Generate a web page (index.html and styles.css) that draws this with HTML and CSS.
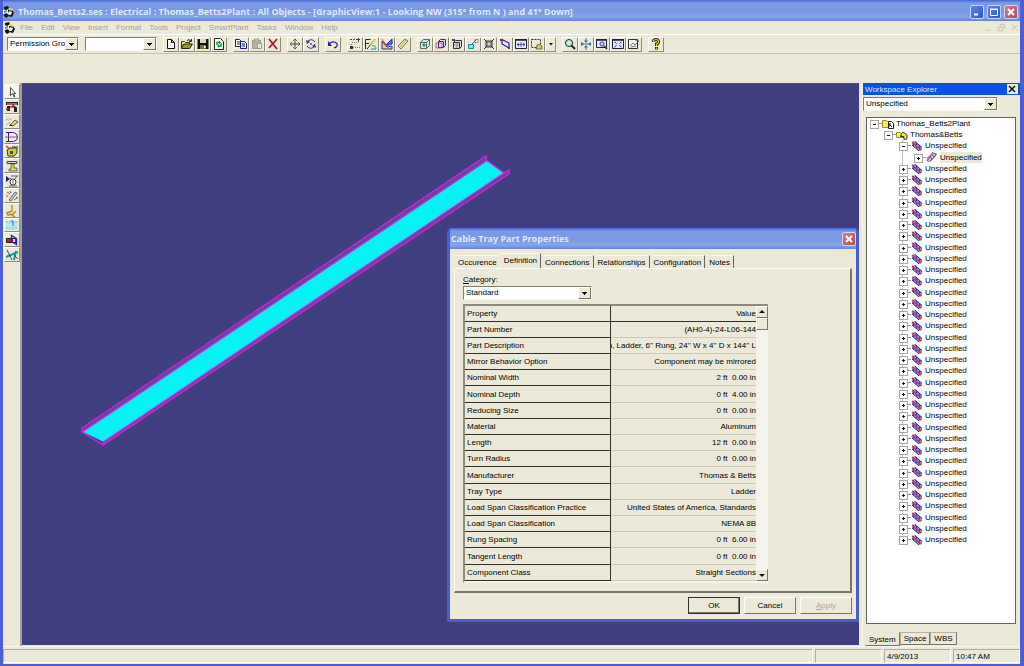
FILE: index.html
```html
<!DOCTYPE html>
<html lang="en">
<head>
<meta charset="utf-8">
<title>Thomas_Betts2.ses</title>
<link rel="stylesheet" href="styles.css">
</head>
<body>
<svg class="defs" aria-hidden="true">
  <symbol id="app" viewBox="0 0 12 12"><path d="M0 4h5v4H0z" fill="#fff"/><path d="M1 1l4-1 1 2-3 2-2-1zM5 4h4l2 3-2 4-4-1 3-2-3-2zM1 8l3-1 2 3-3 2-2-2z" fill="#111"/><path d="M6 2l4 1-1 2-3-1z" fill="#dfe04a"/><path d="M1 5l3-1v2L1 7z" fill="#2c9c8c"/><path d="M6 5l3 1-1 3-3-1z" fill="#f4f4e8"/></symbol>
  <symbol id="tree-plant" viewBox="0 0 12 10"><path d="M.5 1.500h4l1 1h3v6h-8z" fill="#f6ee5a" stroke="#9a9428"/><path d="M6.500 2.500h3l2 2v5h-5z" fill="#fff" stroke="#222"/><path d="M7 5l3 3M7 8V5h2" stroke="#222" fill="none"/></symbol>
  <symbol id="tree-system" viewBox="0 0 12 10"><path d="M.5 2.500h4l1 1h3v4h-8z" fill="#f6ee5a" stroke="#9a9428"/><path d="M5 4l2-2 4 3v4l-3 1V7L5 6z" fill="#f2e33c" stroke="#444"/><path d="M4 6l4 1" stroke="#222"/></symbol>
  <symbol id="tree-run" viewBox="0 0 12 10"><path d="M1 1l3-1 7 6v3l-3 1-7-6z" fill="#8a8edc"/><path d="M1 4l7 6M4 .5l7 6" stroke="#25309c"/><path d="M2.500 1v4M5.500 2v5M8.500 5v4" stroke="#25309c" stroke-width=".8"/><path d="M1 1l9 8" stroke="#d83048" stroke-width="1.400"/></symbol>
  <symbol id="tree-part" viewBox="0 0 12 10"><path d="M1 6l6-5 4 1-6 7-3 .5z" fill="#c2c2c8" stroke="#777" stroke-width=".7"/><path d="M1 9l6-9" stroke="#b020b8"/><path d="M4 9l6-6M4 5l2 2M6 3l2 2M8 1l2 2" stroke="#555" stroke-width=".8"/></symbol>
</svg>

<div class="window">
  <header class="titlebar">
    <svg class="app-icon"><use href="#app"/></svg>
    <h1>Thomas_Betts2.ses : Electrical : Thomas_Betts2Plant : All Objects - [GraphicView:1 - Looking NW (315° from N ) and 41° Down]</h1>
    <button class="cap" aria-label="Minimize"><svg viewBox="0 0 12 12"><path d="M3 8.500h4" stroke="#fff" stroke-width="2"/></svg></button>
    <button class="cap" aria-label="Maximize"><svg viewBox="0 0 12 12"><path d="M2.500 3.500h7v6h-7zM2 3h8" stroke="#fff" fill="none"/></svg></button>
    <button class="cap cap-close" aria-label="Close"><svg viewBox="0 0 12 12"><path d="M3 3l6 6M9 3l-6 6" stroke="#fff" stroke-width="2"/></svg></button>
  </header>

  <nav class="menubar">
    <svg class="app-icon"><use href="#app"/></svg>
    <button>File</button><button>Edit</button><button>View</button><button>Insert</button><button>Format</button><button>Tools</button><button>Project</button><button>SmartPlant</button><button>Tasks</button><button>Window</button><button>Help</button>
    <span class="mdi">
      <button aria-label="Minimize view"><svg viewBox="0 0 10 10"><path d="M2 8h4"/></svg></button>
      <button aria-label="Restore view"><svg viewBox="0 0 10 10"><path d="M3.500 4V1.500h5v4H7M1.500 4.500h5v4h-5z"/></svg></button>
      <button aria-label="Close view"><svg viewBox="0 0 10 10"><path d="M2 2l6 6M8 2L2 8"/></svg></button>
    </span>
  </nav>

  <div class="toolbar" role="toolbar">
    <span class="combo combo-small"><select aria-label="Permission group"><option>Permission Group</option></select></span>
    <span class="combo combo-small"><select aria-label="Filter"><option></option></select></span>
    <div class="group">
      <button aria-label="New"><svg viewBox="0 0 12 12"><path d="M2.500 1.500h4l3 3v6h-7zM6.500 1.500v3h3" fill="#fff" stroke="#111"/></svg></button>
      <button aria-label="Open"><svg viewBox="0 0 12 12"><path d="M.5 10V3.500h3l1 1h4V6" fill="#f4f080" stroke="#333"/><path d="M.5 10.500l2-4.500h9l-3 4.500z" fill="#a09a18" stroke="#222"/><path d="M6 2.500q2-2 4 .5M10.500 1v2.500H8" fill="none" stroke="#222"/></svg></button>
      <button aria-label="Save"><svg viewBox="0 0 12 12"><path d="M.5 1h11v10h-11z" fill="#111"/><path d="M3 1h6v4H3z" fill="#d8d6cc"/><path d="M3 7h6v4H3z" fill="#77771c"/><path d="M7 8h1.500v2H7z" fill="#fff"/></svg></button>
      <button aria-label="Refresh"><svg viewBox="0 0 12 12"><path d="M1.500 .5h6l3 3v8h-9z" fill="#fff" stroke="#222"/><path d="M4 7V4.500h3M8 5.500V8H5" fill="none" stroke="#129a30" stroke-width="1.500"/><path d="M6 2.500l2 2-2 2zM6 6l-2 2 2 2z" fill="#129a30"/></svg></button>
    </div>
    <div class="group">
      <button aria-label="Copy"><svg viewBox="0 0 12 12"><path d="M.5 1.500h4l2 2v5h-6z" fill="#fff" stroke="#223"/><path d="M2 4h3M2 6h3" stroke="#334"/><path d="M5.500 3.500h4l2 2v5h-6z" fill="#eef" stroke="#1a1a90"/><path d="M7 6h3M7 8h3" stroke="#1a1a90"/></svg></button>
      <button aria-label="Paste" disabled><svg viewBox="0 0 12 12"><path d="M1.500 2.500h8v8h-8z" fill="#b5b2a5" stroke="#9c998c"/><path d="M3.500 1h4v2h-4z" fill="#ddd" stroke="#9c998c"/><path d="M6.500 5.500h4v5h-4z" fill="#eceada" stroke="#9c998c"/></svg></button>
      <button aria-label="Delete"><svg viewBox="0 0 12 12"><path d="M2 1l8 10M10 1L2 10" stroke="#a01020" stroke-width="1.600"/></svg></button>
    </div>
    <div class="group">
      <button aria-label="Move"><svg viewBox="0 0 12 12"><path d="M6 1v10M1 6h10M4 3l2-2 2 2M4 9l2 2 2-2M3 4L1 6l2 2M9 4l2 2-2 2" fill="none" stroke="#444" stroke-width=".8"/><path d="M5 5h2v2H5z" fill="#cfc85a" stroke="#333" stroke-width=".6"/></svg></button>
      <button aria-label="Rotate"><svg viewBox="0 0 12 12"><path d="M10 4Q7 0 3 3M2 8q3 4 7 1" fill="none" stroke="#2a2a9a"/><path d="M1 2l1 4 3-2zM11 10l-1-4-3 2z" fill="#2a2a9a"/><path d="M6 5v2M5 6h2" stroke="#555"/></svg></button>
    </div>
    <div class="group">
      <button aria-label="Undo"><svg viewBox="0 0 12 12"><path d="M2 6q4-4 8-.5Q11 9 7 10" fill="none" stroke="#22228c" stroke-width="1.200"/><path d="M1 3v5h4z" fill="#22228c"/></svg></button>
    </div>
    <div class="group">
      <button aria-label="Point"><svg viewBox="0 0 12 12"><path d="M1 1.500h2M4 2l2-1M7 1.500h4M9.500 0v4" stroke="#444"/><path d="M2.500 9V5M4 9.500h7M3 4.500h5" stroke="#777" stroke-dasharray="1 1"/><path d="M1 8h3v3H1z" fill="#333"/></svg></button>
      <button aria-label="Sketch"><svg viewBox="0 0 12 12"><path d="M.5 11V1.500h5M.5 5.500H4" stroke="#222" fill="none"/><path d="M2 11l8-10" stroke="#222"/><path d="M9 1l2 1-5 6-2 1z" fill="#e6dc3c"/><path d="M7 8q4-1 4 3H6" fill="none" stroke="#129a9a"/></svg></button>
      <button aria-label="Measure"><svg viewBox="0 0 12 12"><path d="M1 3v8h10V8L6 9z" fill="#e6dc3c" stroke="#2a2aa0"/><path d="M1 1l4 6 6-5M1 4l7 4" stroke="#c33" fill="none" stroke-width=".8"/><path d="M5 7l6-6v5z" fill="#2a9c9c" stroke="#2a2aa0"/></svg></button>
      <button aria-label="Ruler"><svg viewBox="0 0 12 12"><path d="M1 8l7-7 3 2-7 8z" fill="#efe9a0" stroke="#555" stroke-width=".8"/><path d="M2.500 9.500l7-8" stroke="#b8ac20"/></svg></button>
    </div>
    <div class="group">
      <button aria-label="View box"><svg viewBox="0 0 12 12"><path d="M1.500 4.500l3-3h6v6l-3 3h-6zM1.500 4.500h6v6M7.500 4.500l3-3" fill="#d5eeea" stroke="#444" stroke-width=".8"/><path d="M3 7h4M5 5v4" stroke="#128a6a" stroke-width="1.200"/></svg></button>
      <button aria-label="Clip box"><svg viewBox="0 0 12 12"><path d="M3.500 3.500l2-2h5v6l-2 2h-5zM3.500 3.500h5v6" fill="#dfe0ff" stroke="#2a2aa0"/><path d="M1 5h6v5H1z" fill="none" stroke="#c0392b" stroke-width=".8"/></svg></button>
      <button aria-label="Box select"><svg viewBox="0 0 12 12"><path d="M2.500 4.500h6v6h-6zM2.500 4.500l2-2h6v6l-2 2" fill="#e0dee4" stroke="#333"/><path d="M1 1h3v2H1z" fill="#456"/><path d="M6 5v5M3 7h5" stroke="#889"/></svg></button>
      <button aria-label="Rotate view"><svg viewBox="0 0 12 12"><path d="M1.500 6.500h5v4h-5z" fill="#8fe0e4" stroke="#128a96"/><path d="M8 1.500h3v3H8z" fill="#fff" stroke="#889"/><path d="M5 6l4-4" stroke="#c33"/></svg></button>
      <button aria-label="Fence"><svg viewBox="0 0 12 12"><path d="M1 1l10 10M11 1L1 11M3 3h6v6H3z" stroke="#222" fill="none" stroke-width=".9"/><path d="M4 4h4v4H4z" fill="#d0cee8" stroke="#222" stroke-width=".6"/></svg></button>
      <button aria-label="Plane"><svg viewBox="0 0 12 12"><path d="M3 1.500l7 3.500v5L3 6z" fill="#e8e8ff" stroke="#20208c" stroke-width="1.200"/><path d="M1 1h2v2H1zM9 9h2v2H9z" fill="#b01830"/></svg></button>
      <button aria-label="Pan window"><svg viewBox="0 0 12 12"><path d="M.5 1.500h11v9H.5z" fill="#e8eafa" stroke="#223"/><path d="M0 2h12" stroke="#223" stroke-width="1.500"/><path d="M2 6.500h8M6 4v5M4 5L2 6.500 4 8M8 5l2 1.500L8 8" fill="none" stroke="#3838a8" stroke-width=".8"/></svg></button>
      <button aria-label="Select area"><svg viewBox="0 0 12 12"><path d="M.5 1.500h9v8h-9z" fill="none" stroke="#333" stroke-dasharray="2 1"/><path d="M5 11l1-4q3-2 5 1v3z" fill="#d8ca3c" stroke="#554" stroke-width=".8"/></svg></button>
      <button class="drop" aria-label="Select area options"><svg viewBox="0 0 8 12"><path d="M2 5h4L4 7.500z" fill="#111"/></svg></button>
    </div>
    <div class="group">
      <button aria-label="Zoom"><svg viewBox="0 0 12 12"><circle cx="5" cy="5" r="3.500" fill="#c4f0ee" stroke="#222"/><path d="M7.500 7.500L11 11" stroke="#222" stroke-width="2"/></svg></button>
      <button aria-label="Fit"><svg viewBox="0 0 12 12"><path d="M6 0v4M6 8v4M1 6h10" stroke="#3a6f9a"/><path d="M4 2.500h4L6 5zM4 9.500h4L6 7zM1 4l3 2-3 2zM11 4L8 6l3 2z" fill="#3a6f9a"/></svg></button>
      <button aria-label="Zoom area"><svg viewBox="0 0 12 12"><path d="M.5 1.500h10v8H.5z" fill="#e4e6f6" stroke="#223"/><path d="M0 2h11" stroke="#224" stroke-width="1.500"/><circle cx="6" cy="6" r="2" fill="#c4f0ee" stroke="#3838a0"/><path d="M8 8l3 3" stroke="#222" stroke-width="1.500"/></svg></button>
      <button aria-label="Tile"><svg viewBox="0 0 12 12"><path d="M.5 1.500h11v9H.5z" fill="#e4e6f6" stroke="#223"/><path d="M0 2h12" stroke="#224" stroke-width="1.500"/><path d="M2.500 4l2 1.500M9.500 4l-2 1.500M2.500 9l2-1.500M9.500 9l-2-1.500" stroke="#2a2a90"/></svg></button>
      <button aria-label="Previous view"><svg viewBox="0 0 12 12"><path d="M.5 1.500h9v9h-9z" fill="#f2f2f2" stroke="#333"/><path d="M2 8l3-3 2 2 4-4M7 2l4 1M3 9l5-1" fill="none" stroke="#555" stroke-width=".8"/></svg></button>
    </div>
    <div class="group">
      <button aria-label="Help"><svg viewBox="0 0 12 12"><path d="M3.500 4Q3.500 1.500 6 1.500T8.500 4Q8.500 5.500 6.500 6v2M6.500 9v2.500" fill="none" stroke="#222" stroke-width="3"/><path d="M3.500 4Q3.500 1.500 6 1.500T8.500 4Q8.500 5.500 6.500 6v2M6.500 9.500V11" fill="none" stroke="#e8d820" stroke-width="1.200"/></svg></button>
    </div>
  </div>

  <div class="workspace">
    <div class="tools" role="toolbar">
      <button class="on" aria-label="Select"><svg viewBox="0 0 14 12"><path d="M5.500 1.500v8l2-2 1.500 3.500 1-.5-1.500-3h2z" fill="#fff" stroke="#222" stroke-width=".8"/></svg></button>
      <button aria-label="Route pipe"><svg viewBox="0 0 14 12"><path d="M1 4V1h12v3zM2 10V5h3v5zM9 11V6h3v5z" fill="#222"/><path d="M2 3h10M6 6q3-3 6 0" stroke="#d8d6cc"/><path d="M1 8h3M5 6l4-1M8 3v4" stroke="#c02030" stroke-width="1.500"/></svg></button>
      <button aria-label="Edit"><svg viewBox="0 0 14 12"><path d="M1 4q3-3 6 0M2 9l3-3" stroke="#aaa" fill="none"/><path d="M5 9l5-5 3 2-5 4z" fill="#e6d84c" stroke="#333" stroke-width=".8"/><path d="M4 10l2-2 1 2z" fill="#222"/></svg></button>
      <button aria-label="Insert equipment"><svg viewBox="0 0 14 12"><path d="M3.500 1.500h5q4 1 4 4.500t-4 4.500h-5z" fill="#eef" stroke="#2020b0"/><path d="M0 6h13" stroke="#d03040"/><path d="M1 1.500h3M1 10.500h3" stroke="#2020b0"/></svg></button>
      <button aria-label="Insert box"><svg viewBox="0 0 14 12"><path d="M2 5l3-2h7v5l-3 3H3z" fill="#d8cc30" stroke="#333"/><path d="M5 6h3v3H5z" fill="#3a4a8a"/><path d="M1 1l4 3" stroke="#d03040" stroke-width="1.500"/><path d="M7 2h6" stroke="#333"/></svg></button>
      <button aria-label="Insert beam"><svg viewBox="0 0 14 12"><path d="M2 1.500h10v2H2z" fill="#ddd" stroke="#444"/><path d="M6 4h3v4h3v3H4V9h2z" fill="#ecd81c" stroke="#2a3a9a" stroke-width=".7"/></svg></button>
      <button aria-label="Insert instrument"><svg viewBox="0 0 14 12"><path d="M1 1l4 3-4 3z" fill="#1c1c90"/><circle cx="8" cy="7" r="3" fill="#fff" stroke="#333"/><path d="M5 3l2 2M12 1L9 5M4 11h8M6 1h7M8 5v4" stroke="#444" stroke-width=".8"/></svg></button>
      <button aria-label="Insert by rule"><svg viewBox="0 0 14 12"><path d="M4 10l6-8 2 1-6 8z" fill="#c8c8cc" stroke="#555" stroke-width=".8"/><path d="M2 2l3 2M1 6h2M9 10l3-2" stroke="#d04050"/><path d="M5 1l1 2M11 7l2 1" stroke="#3a5ab0"/></svg></button>
      <button aria-label="Insert support"><svg viewBox="0 0 14 12"><path d="M7 0v6L2 8l1 2 5-1 3-3M6 9l4 3" fill="none" stroke="#b48a14" stroke-width="1.500"/><path d="M8 1v5" stroke="#f0dc30"/></svg></button>
      <button aria-label="Insert slab"><svg viewBox="0 0 14 12"><path d="M1 2h12v9H1z" fill="#b8ecea"/><path d="M1 3h12M1 9h12" stroke="#7cc8c8" stroke-dasharray="2 1"/><path d="M8 2v5M8 2H6" stroke="#2a6ab0"/></svg></button>
      <button aria-label="Insert split"><svg viewBox="0 0 14 12"><path d="M1.500 4.500h10v4h-10z" fill="#c02040" stroke="#222"/><path d="M6.500 1.500l5 3v6l-5-3z" fill="none" stroke="#2020b0" stroke-width="1.300"/><path d="M8 5h2v3H8z" fill="#cdd0f8"/></svg></button>
      <button aria-label="Insert branch"><svg viewBox="0 0 14 12"><path d="M1 8l12-5M9 11l2-9" stroke="#149a96" stroke-width="2"/><path d="M2 1l5 10M9 6l4 4" stroke="#2a4a7a"/></svg></button>
    </div>

    <main class="view">
      <svg class="scene" viewBox="0 0 837 561" role="img" aria-label="Cable tray">
        <path d="M61 344L465 71v6L61 348z" fill="#50508c"/>
        <path d="M82 358l399-269 6-3v4L82 361z" fill="#50508c"/>
        <path d="M61 348L465 77l17 12L82 358z" fill="#00f4f4"/>
        <path d="M60 348v-4L464 72v5L60 348l21 13v-3L482 89l5-3v4L81 361M464 76l18 13" fill="none" stroke="#f013f0" stroke-width="1.200"/>
      </svg>

      <section class="dialog" aria-label="Cable Tray Part Properties">
        <header class="dialog-title">
          <h2>Cable Tray Part Properties</h2>
          <button class="cap cap-close" aria-label="Close dialog"><svg viewBox="0 0 12 12"><path d="M3 3l6 6M9 3l-6 6" stroke="#fff" stroke-width="2"/></svg></button>
        </header>
        <div class="dialog-body">
          <div class="tabs" role="tablist">
            <button role="tab">Occurence</button><button role="tab" class="active" aria-selected="true">Definition</button><button role="tab">Connections</button><button role="tab">Relationships</button><button role="tab">Configuration</button><button role="tab">Notes</button>
          </div>
          <div class="page">
            <label for="category"><u>C</u>ategory:</label>
            <span class="combo combo-category"><select id="category"><option>Standard</option></select></span>
            <div class="sheet">
              <table>
                <thead><tr><th>Property</th><th><div>Value</div></th></tr></thead>
                <tbody>
                  <tr><th>Part Number</th><td><div>(AH0-4)-24-L06-144</div></td></tr>
                  <tr><th>Part Description</th><td><div>n, Ladder, 6'' Rung, 24'' W x 4'' D x 144'' L</div></td></tr>
                  <tr><th>Mirror Behavior Option</th><td><div>Component may be mirrored</div></td></tr>
                  <tr><th>Nominal Width</th><td><div>2 ft&nbsp; 0.00 in</div></td></tr>
                  <tr><th>Nominal Depth</th><td><div>0 ft&nbsp; 4.00 in</div></td></tr>
                  <tr><th>Reducing Size</th><td><div>0 ft&nbsp; 0.00 in</div></td></tr>
                  <tr><th>Material</th><td><div>Aluminum</div></td></tr>
                  <tr><th>Length</th><td><div>12 ft&nbsp; 0.00 in</div></td></tr>
                  <tr><th>Turn Radius</th><td><div>0 ft&nbsp; 0.00 in</div></td></tr>
                  <tr><th>Manufacturer</th><td><div>Thomas &amp; Betts</div></td></tr>
                  <tr><th>Tray Type</th><td><div>Ladder</div></td></tr>
                  <tr><th>Load Span Classification Practice</th><td><div>United States of America, Standards</div></td></tr>
                  <tr><th>Load Span Classification</th><td><div>NEMA 8B</div></td></tr>
                  <tr><th>Rung Spacing</th><td><div>0 ft&nbsp; 6.00 in</div></td></tr>
                  <tr><th>Tangent Length</th><td><div>0 ft&nbsp; 0.00 in</div></td></tr>
                  <tr><th>Component Class</th><td><div>Straight Sections</div></td></tr>
                </tbody>
              </table>
              <div class="scroll">
                <button aria-label="Scroll up"><svg viewBox="0 0 10 10"><path d="M2 6h6L5 3z"/></svg></button>
                <span class="thumb"></span>
                <button class="down" aria-label="Scroll down"><svg viewBox="0 0 10 10"><path d="M2 4h6L5 7z"/></svg></button>
              </div>
            </div>
          </div>
          <div class="actions">
            <button class="default">OK</button><button>Cancel</button><button disabled><u>A</u>pply</button>
          </div>
        </div>
      </section>
    </main>

    <aside class="explorer">
      <header><h2>Workspace Explorer</h2><button aria-label="Close explorer"><svg viewBox="0 0 10 10"><path d="M2 2l6 6M8 2L2 8" stroke="#111" stroke-width="1.500"/></svg></button></header>
      <span class="combo combo-explorer"><select aria-label="Workspace filter"><option>Unspecified</option></select></span>
      <div class="tree-panel">
        <ul class="tree">
          <li class="l0 open"><i></i><svg><use href="#tree-plant"/></svg><span>Thomas_Betts2Plant</span></li>
          <li class="l1 open"><i></i><svg><use href="#tree-system"/></svg><span>Thomas&amp;Betts</span></li>
          <li class="l2 open"><i></i><svg><use href="#tree-run"/></svg><span>Unspecified</span></li>
          <li class="l3"><i></i><svg><use href="#tree-part"/></svg><span class="picked">Unspecified</span></li>
          <li class="l2"><i></i><svg><use href="#tree-run"/></svg><span>Unspecified</span></li>
          <li class="l2"><i></i><svg><use href="#tree-run"/></svg><span>Unspecified</span></li>
          <li class="l2"><i></i><svg><use href="#tree-run"/></svg><span>Unspecified</span></li>
          <li class="l2"><i></i><svg><use href="#tree-run"/></svg><span>Unspecified</span></li>
          <li class="l2"><i></i><svg><use href="#tree-run"/></svg><span>Unspecified</span></li>
          <li class="l2"><i></i><svg><use href="#tree-run"/></svg><span>Unspecified</span></li>
          <li class="l2"><i></i><svg><use href="#tree-run"/></svg><span>Unspecified</span></li>
          <li class="l2"><i></i><svg><use href="#tree-run"/></svg><span>Unspecified</span></li>
          <li class="l2"><i></i><svg><use href="#tree-run"/></svg><span>Unspecified</span></li>
          <li class="l2"><i></i><svg><use href="#tree-run"/></svg><span>Unspecified</span></li>
          <li class="l2"><i></i><svg><use href="#tree-run"/></svg><span>Unspecified</span></li>
          <li class="l2"><i></i><svg><use href="#tree-run"/></svg><span>Unspecified</span></li>
          <li class="l2"><i></i><svg><use href="#tree-run"/></svg><span>Unspecified</span></li>
          <li class="l2"><i></i><svg><use href="#tree-run"/></svg><span>Unspecified</span></li>
          <li class="l2"><i></i><svg><use href="#tree-run"/></svg><span>Unspecified</span></li>
          <li class="l2"><i></i><svg><use href="#tree-run"/></svg><span>Unspecified</span></li>
          <li class="l2"><i></i><svg><use href="#tree-run"/></svg><span>Unspecified</span></li>
          <li class="l2"><i></i><svg><use href="#tree-run"/></svg><span>Unspecified</span></li>
          <li class="l2"><i></i><svg><use href="#tree-run"/></svg><span>Unspecified</span></li>
          <li class="l2"><i></i><svg><use href="#tree-run"/></svg><span>Unspecified</span></li>
          <li class="l2"><i></i><svg><use href="#tree-run"/></svg><span>Unspecified</span></li>
          <li class="l2"><i></i><svg><use href="#tree-run"/></svg><span>Unspecified</span></li>
          <li class="l2"><i></i><svg><use href="#tree-run"/></svg><span>Unspecified</span></li>
          <li class="l2"><i></i><svg><use href="#tree-run"/></svg><span>Unspecified</span></li>
          <li class="l2"><i></i><svg><use href="#tree-run"/></svg><span>Unspecified</span></li>
          <li class="l2"><i></i><svg><use href="#tree-run"/></svg><span>Unspecified</span></li>
          <li class="l2"><i></i><svg><use href="#tree-run"/></svg><span>Unspecified</span></li>
          <li class="l2"><i></i><svg><use href="#tree-run"/></svg><span>Unspecified</span></li>
          <li class="l2"><i></i><svg><use href="#tree-run"/></svg><span>Unspecified</span></li>
          <li class="l2"><i></i><svg><use href="#tree-run"/></svg><span>Unspecified</span></li>
          <li class="l2"><i></i><svg><use href="#tree-run"/></svg><span>Unspecified</span></li>
          <li class="l2"><i></i><svg><use href="#tree-run"/></svg><span>Unspecified</span></li>
          <li class="l2"><i></i><svg><use href="#tree-run"/></svg><span>Unspecified</span></li>
          <li class="l2 last"><i></i><svg><use href="#tree-run"/></svg><span>Unspecified</span></li>
        </ul>
      </div>
      <div class="bottom-tabs" role="tablist">
        <button role="tab" class="active" aria-selected="true">System</button><button role="tab">Space</button><button role="tab">WBS</button>
      </div>
    </aside>
  </div>

  <footer class="status"><span class="grow"></span><span></span><span>4/9/2013</span><span>10:47 AM</span></footer>
</div>
</body>
</html>
```
FILE: styles.css
```css
:root {
  --face: #ece9d8;
  --ink: #000;
  --sans: "Liberation Sans", sans-serif;
}
* { box-sizing: border-box; }
body { margin: 0; background: var(--face); color: var(--ink); font: 8px/11px var(--sans); }
button, select { font: inherit; color: inherit; margin: 0; padding: 0; border: 0; background: none; border-radius: 0; }
button svg { display: block; }
h1, h2 { margin: 0; font: bold 9px/12px "Open Sans", sans-serif; color: #dfe9ff; white-space: nowrap; }
.defs { position: absolute; width: 0; height: 0; }

.window { display: flex; flex-direction: column; min-height: 100vh; border: solid #4c5fd6; border-width: 0 4px 3px 3px; }

/* title bar */
.titlebar { display: flex; align-items: center; gap: 3px; height: 21px; padding: 3px 2px 0 0; background: linear-gradient(#4566cf, #7b9be8 3px, #7b98e0 12px, #84a6ee 17px, #6883d6); }
.titlebar h1 { flex: 1; overflow: hidden; }
.app-icon { width: 12px; height: 12px; flex: none; }
.cap { width: 14px; height: 14px; border: 1px solid #c9d6f8; border-radius: 2px; background: linear-gradient(135deg, #5f86ea, #2c56cf); }
.cap svg { width: 12px; height: 12px; }
.cap-close { background: linear-gradient(135deg, #cf7f86, #b04a5c); }

/* menu */
.menubar { display: flex; align-items: center; height: 14px; padding-left: 1px; border-bottom: 1px solid #fff; color: #a5a192; }
.menubar > button { margin-left: 8px; }
.menubar .app-icon + button { margin-left: 4px; }
.mdi { display: flex; gap: 4px; margin-left: auto; padding-right: 1px; }
.mdi svg { width: 9px; height: 9px; fill: none; stroke: #c2bfb0; stroke-width: 1; }

/* combo boxes */
.combo { display: flex; position: relative; height: 14px; background: #fff; border: 1px solid; border-color: #7f7d70 #f8f7f0 #f8f7f0 #7f7d70; }
.combo select { appearance: none; width: 100%; padding: 0 11px 0 2px; line-height: 12px; overflow: hidden; }
.combo::after { content: ""; position: absolute; right: 0; top: 0; bottom: 0; width: 11px; pointer-events: none; border: 1px solid; border-color: #fff #77756a #77756a #fff; background: linear-gradient(var(--ink), var(--ink)) center 4px / 5px 1px no-repeat, linear-gradient(var(--ink), var(--ink)) center 5px / 3px 1px no-repeat, linear-gradient(var(--ink), var(--ink)) center 6px / 1px 1px no-repeat, var(--face); }
.combo-small { width: 72px; }
.combo-category { width: 129px; }
.combo-explorer { width: 135px; }

/* top toolbar */
.toolbar { display: flex; align-items: center; gap: 6px; height: 19px; margin-bottom: 29px; padding-left: 4px; border-bottom: 1px solid #c5c2b2; }
.group { display: flex; }
.group button, .tools button { display: grid; place-items: center; width: 16px; height: 15px; border: 1px solid; border-color: #fff #8d8a7c #8d8a7c #fff; }
.group svg { width: 12px; height: 12px; }
.group .drop { width: 11px; }
.group .drop svg { width: 8px; }

/* work area */
.workspace { flex: 1; display: flex; }
.tools { flex: none; width: 19px; padding: 1px 2px 0 1px; border-right: 2px solid #a5a292; }
.tools button:nth-child(5n) { height: 14px; }
.tools svg { width: 14px; height: 12px; }
.tools .on { background: #f7f5ee; }
.view { position: relative; flex: 1; min-width: 0; margin-bottom: 1px; background: #403f80; border-top: 1px solid #55545c; }
.scene { display: block; width: 100%; }

/* properties dialog */
.dialog { position: absolute; right: 0; top: 144px; width: 412px; padding: 0 3px 3px 3px; background: #4a5cd4; border-radius: 5px 5px 0 0; }
.dialog-title { display: flex; align-items: center; justify-content: space-between; height: 21px; background: linear-gradient(#4566cf, #7b9be8 3px, #7b98e0 12px, #84a6ee 17px, #6883d6); }
.dialog-title h2 { padding-left: 1px; }
.dialog-body { padding: 4px 4px 5px; background: var(--face); }
.tabs { display: flex; align-items: flex-end; height: 15px; }
.tabs button { height: 13px; padding: 0 3px 0 4px; border-top: 1px solid #f6f5ee; border-right: 1px solid #66645a; }
.tabs button:first-child { border-right: 0; }
.tabs .active { height: 15px; padding-bottom: 2px; }
.page { padding: 5px 8px 8px; border: 1px solid; border-color: #fff #77756a #77756a #fff; border-right-width: 2px; border-bottom-width: 2px; }
.page label { display: block; height: 12px; }
.sheet { display: flex; width: 305px; margin-top: 4px; border-left: 2px solid #8d8a7c; border-top: 2px solid #8d8a7c; border-bottom: 2px solid #f6f4ea; }
table { flex: 1; width: 100%; border-collapse: separate; border-spacing: 0; table-layout: fixed; }
th, td { height: 16px; padding: 0; font-weight: normal; text-align: left; border-bottom: 1px solid #ccc9ba; }
tbody tr:nth-child(5n) > * { height: 17px; }
tr > :first-child { width: 146px; padding-left: 2px; border-right: 1px solid #33322c; border-bottom-color: #33322c; }
thead th { border-bottom-color: #33322c; }
tr div { display: flex; justify-content: flex-end; overflow: hidden; white-space: nowrap; }
.scroll { display: flex; flex-direction: column; flex: none; width: 12px; background: #f5f3ec; }
.scroll button, .thumb { height: 12px; background: var(--face); border: 1px solid; border-color: #fff #77756a #77756a #fff; }
.scroll svg { width: 10px; height: 10px; fill: #111; }
.scroll .down { margin-top: auto; }
.actions { display: flex; justify-content: flex-end; gap: 4px; margin-top: 4px; }
.actions button { width: 52px; height: 17px; border: 1px solid; border-color: #fff #77756a #77756a #fff; }
.actions .default { border-color: #33322c; box-shadow: inset -1px -1px #77756a; }
.actions button:disabled { color: #aca899; }

/* explorer */
.explorer { display: flex; flex-direction: column; flex: none; width: 158px; margin-left: 3px; border-left: 1px solid #f8f7f0; }
.explorer header { display: flex; align-items: center; justify-content: space-between; height: 12px; padding: 0 2px; background: #0a53e2; }
.explorer h2 { font: 8px/11px var(--sans); }
.explorer header button { width: 11px; height: 10px; background: var(--face); }
.explorer header svg { width: 10px; height: 10px; }
.combo-explorer { margin-top: 2px; }
.tree-panel { flex: 1; margin: 6px 4px 0 3px; background: #fff; border: 1px solid #66645a; }
.tree { margin: 0; padding: 0; list-style: none; }
.tree li { display: flex; align-items: center; height: 11px; }
.tree li:nth-child(4n) { height: 12px; }
.tree svg { width: 12px; height: 10px; flex: none; margin-right: 2px; }
.tree i { position: relative; width: 12px; height: 7px; flex: none; background: linear-gradient(#999, #999) 7px 3px / 5px 1px no-repeat; }
.tree i::before { content: ""; position: absolute; left: 0; top: 0; width: 7px; height: 7px; border: 1px solid #a8a8a0; background: linear-gradient(#111, #111) center / 3px 1px no-repeat, linear-gradient(#111, #111) center / 1px 3px no-repeat, #fff; }
.tree .open i::before { background: linear-gradient(#111, #111) center / 3px 1px no-repeat, #fff; }
.l0 { padding-left: 3px; }
.l1 { padding-left: 17px; }
.l2 { padding-left: 32px; background: linear-gradient(#c4c4c0, #c4c4c0) 35px 0 / 1px 100% no-repeat; }
.l3 { padding-left: 47px; background: linear-gradient(#c4c4c0, #c4c4c0) 35px 0 / 1px 100% no-repeat; }
.last { background-size: 1px 50%; }
.picked { background: #ece9d8; }
.bottom-tabs { display: flex; align-items: flex-start; height: 21px; margin-top: 1px; padding: 7px 0 0 2px; }
.bottom-tabs button { height: 13px; padding: 0 3px; border: 1px solid; border-color: #b5b2a2 #77756a #77756a #b5b2a2; }
.bottom-tabs .active { height: 14px; border-color: transparent #77756a #77756a transparent; }

/* status */
.status { display: flex; gap: 2px; height: 18px; padding: 2px 0 1px; border-top: 1px solid #f8f7f0; line-height: 13px; }
.status span { width: 67px; padding-left: 2px; border: 1px solid; border-color: #b0ad9d #fff #fff #b0ad9d; }
.status .grow { flex: 1; }
```
